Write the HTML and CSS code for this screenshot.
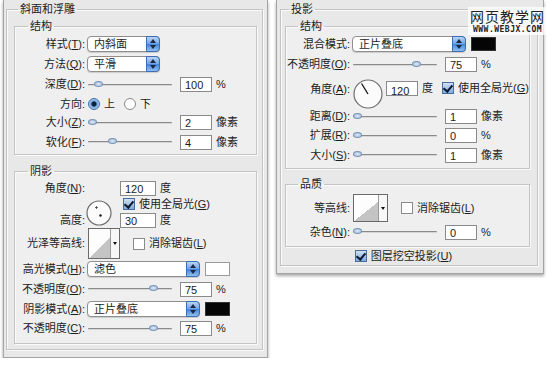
FILE: index.html
```html
<!DOCTYPE html>
<html lang="zh">

<head>
  <meta charset="UTF-8">
  <title>图层样式</title>
  <link rel="stylesheet" href="styles.css">
</head>

<body>
  <main class="stage">
    <section class="window win-left">
      <fieldset class="frame">
        <legend>斜面和浮雕</legend>

        <fieldset class="group g-bevel">
          <legend>结构</legend>
          <div class="row h20">
            <span class="lbl">样式(<u>T</u>):</span>
            <span class="select w73">内斜面<i class="arrows"></i></span>
          </div>
          <div class="row h20">
            <span class="lbl">方法(<u>Q</u>):</span>
            <span class="select w73">平滑<i class="arrows"></i></span>
          </div>
          <div class="row h21">
            <span class="lbl">深度(<u>D</u>):</span>
            <span class="slider"><i class="thumb" style="left:6px"></i></span>
            <span class="field">100</span><span class="unit">%</span>
          </div>
          <div class="row h18">
            <span class="lbl">方向:</span>
            <span class="radio on"></span><span class="opt">上</span>
            <span class="radio"></span><span class="opt">下</span>
          </div>
          <div class="row h19">
            <span class="lbl">大小(<u>Z</u>):</span>
            <span class="slider"><i class="thumb" style="left:0px"></i></span>
            <span class="field">2</span><span class="unit">像素</span>
          </div>
          <div class="row h20">
            <span class="lbl">软化(<u>F</u>):</span>
            <span class="slider"><i class="thumb" style="left:20px"></i></span>
            <span class="field">4</span><span class="unit">像素</span>
          </div>
        </fieldset>

        <fieldset class="group g-shade">
          <legend>阴影</legend>
          <div class="angle-block">
            <div class="lbl-col">
              <span class="lbl">角度(<u>N</u>):</span>
              <span class="lbl">高度:</span>
            </div>
            <svg class="dial dial-sm" viewBox="0 0 26 26">
              <circle cx="13" cy="13" r="12" fill="#fbfbfb" stroke="#6d6d6d" stroke-width="1.2" />
              <path d="M9 7.5h3M10.5 6v3" stroke="#444" stroke-width="0.8" />
              <circle cx="14.5" cy="15.5" r="1.2" fill="#111" />
            </svg>
            <div class="angle-fields">
              <div class="line"><span class="field w36">120</span><span class="unit">度</span></div>
              <div class="line"><span class="check on"></span>使用全局光(<u>G</u>)</div>
              <div class="line"><span class="field w36">30</span><span class="unit">度</span></div>
            </div>
          </div>
          <div class="row h31">
            <span class="lbl">光泽等高线:</span>
            <span class="contour c-sm"><i class="drop"></i></span>
            <span class="check"></span>消除锯齿(<u>L</u>)
          </div>
          <div class="row h20">
            <span class="lbl">高光模式(<u>H</u>):</span>
            <span class="select w113">滤色<i class="arrows"></i></span>
            <span class="swatch white"></span>
          </div>
          <div class="row h20">
            <span class="lbl">不透明度(<u>O</u>):</span>
            <span class="slider"><i class="thumb" style="left:61px"></i></span>
            <span class="field">75</span><span class="unit">%</span>
          </div>
          <div class="row h20">
            <span class="lbl">阴影模式(<u>A</u>):</span>
            <span class="select w113">正片叠底<i class="arrows"></i></span>
            <span class="swatch black"></span>
          </div>
          <div class="row h19">
            <span class="lbl">不透明度(<u>C</u>):</span>
            <span class="slider"><i class="thumb" style="left:61px"></i></span>
            <span class="field">75</span><span class="unit">%</span>
          </div>
        </fieldset>
      </fieldset>
    </section>

    <section class="window win-right">
      <fieldset class="frame">
        <legend>投影</legend>

        <fieldset class="group g-drop">
          <legend>结构</legend>
          <div class="row h20">
            <span class="lbl">混合模式:</span>
            <span class="select w114">正片叠底<i class="arrows"></i></span>
            <span class="swatch black"></span>
          </div>
          <div class="row h21">
            <span class="lbl">不透明度(<u>O</u>):</span>
            <span class="slider"><i class="thumb" style="left:59px"></i></span>
            <span class="field">75</span><span class="unit">%</span>
          </div>
          <div class="angle-row">
            <span class="lbl">角度(<u>A</u>):</span>
            <svg class="dial dial-lg" viewBox="0 0 30 30">
              <circle cx="15" cy="15" r="14" fill="#fbfbfb" stroke="#6d6d6d" stroke-width="1.2" />
              <path d="M15 15L8.5 4.5" stroke="#111" stroke-width="1.3" />
            </svg>
            <span class="field">120</span><span class="unit">度</span>
            <span class="check on gap"></span><span class="txt">使用全局光(<u>G</u>)</span>
          </div>
          <div class="row h19">
            <span class="lbl">距离(<u>D</u>):</span>
            <span class="slider"><i class="thumb" style="left:0px"></i></span>
            <span class="field">1</span><span class="unit">像素</span>
          </div>
          <div class="row h19">
            <span class="lbl">扩展(<u>R</u>):</span>
            <span class="slider"><i class="thumb" style="left:0px"></i></span>
            <span class="field">0</span><span class="unit">%</span>
          </div>
          <div class="row h20">
            <span class="lbl">大小(<u>S</u>):</span>
            <span class="slider"><i class="thumb" style="left:0px"></i></span>
            <span class="field">1</span><span class="unit">像素</span>
          </div>
        </fieldset>

        <fieldset class="group g-quality">
          <legend>品质</legend>
          <div class="row h32">
            <span class="lbl">等高线:</span>
            <span class="contour c-lg"><i class="drop"></i></span>
            <span class="check"></span>消除锯齿(<u>L</u>)
          </div>
          <div class="row h16">
            <span class="lbl">杂色(<u>N</u>):</span>
            <span class="slider"><i class="thumb" style="left:0px"></i></span>
            <span class="field">0</span><span class="unit">%</span>
          </div>
        </fieldset>

        <div class="knockout"><span class="check on"></span>图层挖空投影(<u>U</u>)</div>
      </fieldset>
    </section>

    <div class="watermark">
      <span class="wm-cn">网页教学网</span>
      <span class="wm-en">WWW.WEBJX.COM</span>
    </div>
  </main>
</body>

</html>
```

FILE: styles.css
```css
* {
  box-sizing: border-box;
}

body {
  margin: 0;
  background: #fff;
  color: #1c1c1c;
  font: 11px/1 "Liberation Sans", "Noto Sans CJK SC", sans-serif;
}

u {
  text-decoration: underline;
  text-underline-offset: 1px;
}

.stage {
  display: flex;
  align-items: flex-start;
  gap: 8px;
  padding-left: 3px;
  position: relative;
}

.window {
  background: #e8e8e8;
  border: 1px solid #a4a4a4;
  border-top: 0;
  box-shadow: 0 2px 3px rgba(0, 0, 0, 0.35);
}

.win-left {
  width: 265px;
  height: 358px;
  padding: 2px 4px 0 2px;
}

.win-right {
  width: 268px;
  height: 274px;
  padding: 2px 8px 0 3px;
}

fieldset {
  margin: 0;
  border: 1px solid #c4c4c4;
  box-shadow: 1px 1px 0 #fafafa, inset 1px 1px 0 #fafafa;
}

legend {
  line-height: 14px;
  padding: 0 2px;
  font-size: 11px;
}

.frame {
  padding: 3px 5px 5px 7px;
}

.frame > legend {
  margin-left: 4px;
}

.win-right .frame {
  padding: 3px 7px 1px 4px;
}

.group {
  background: #efefef;
  padding: 1px 0 2px 0;
}

.group > legend {
  margin-left: 13px;
}

.win-right .group > legend {
  margin-left: 12px;
}

.g-shade {
  margin-top: 9px;
  padding-bottom: 5px;
}

.g-drop {
  padding-bottom: 3px;
}

.g-quality {
  margin-top: 8px;
  padding-bottom: 6px;
}

.row {
  display: flex;
  align-items: center;
  white-space: nowrap;
}

.h16 { height: 16px; }
.h18 { height: 18px; }
.h19 { height: 19px; }
.h20 { height: 20px; }
.h21 { height: 21px; }
.h31 { height: 31px; }
.h32 { height: 32px; }

.lbl {
  display: flex;
  justify-content: flex-end;
  width: 70px;
  margin-right: 3px;
  white-space: nowrap;
  flex-shrink: 0;
}

.win-right .lbl {
  width: 64px;
}

/* select boxes */
.select {
  position: relative;
  height: 16px;
  margin-left: -1px;
  padding: 2px 0 0 6px;
  background: #fff;
  border: 1px solid #8f8f8f;
  border-radius: 4px;
  box-shadow: 0 1px 1px rgba(0, 0, 0, 0.15);
}

.w73 { width: 73px; }
.w113 { width: 113px; }
.w114 { width: 114px; }

.arrows {
  position: absolute;
  top: -1px;
  right: -1px;
  width: 14px;
  height: 16px;
  border: 1px solid #3b6db3;
  border-radius: 0 4px 4px 0;
  background: linear-gradient(#b8d6f6, #6aa3e6 50%, #3f84d8 51%, #8fc0f3);
}

.arrows::before,
.arrows::after {
  content: "";
  position: absolute;
  left: 3px;
  border-left: 3px solid transparent;
  border-right: 3px solid transparent;
}

.arrows::before {
  top: 2px;
  border-bottom: 4px solid #1d2a44;
}

.arrows::after {
  bottom: 2px;
  border-top: 4px solid #1d2a44;
}

.swatch {
  width: 25px;
  height: 14px;
  margin-left: 5px;
  border: 1px solid #9a9a9a;
}

.swatch.white { background: #fff; }
.swatch.black { background: #050505; border-color: #333; }

/* sliders */
.slider {
  position: relative;
  width: 84px;
  height: 2px;
  margin-right: 8px;
  background: #8a8a8a;
  border-bottom: 1px solid #d6d6d6;
  border-radius: 1px;
  flex-shrink: 0;
}

.thumb {
  position: absolute;
  top: -3px;
  width: 9px;
  height: 6px;
  background: radial-gradient(#e2ecf8, #8fb0d6);
  border: 1px solid #7c93b3;
  border-radius: 50%;
}

.field {
  width: 32px;
  height: 15px;
  padding: 2px 0 0 4px;
  background: #fff;
  border: 1px solid #8a8a8a;
  font-size: 11px;
  flex-shrink: 0;
}

.field.w36 {
  width: 36px;
}

.unit {
  margin-left: 4px;
}

/* radios and checks */
.radio {
  width: 12px;
  height: 12px;
  margin-right: 4px;
  border: 1px solid #8a8a8a;
  border-radius: 50%;
  background: #fff;
}

.radio.on {
  border-color: #3f6ea8;
  background: radial-gradient(circle, #0e1f3a 0 2px, #6e9fd9 3px, #cfe1f6 6px);
}

.opt {
  margin-right: 9px;
}

.check {
  width: 12px;
  height: 12px;
  margin-right: 4px;
  border: 1px solid #8a8a8a;
  background: #fff;
  flex-shrink: 0;
}

.check.on {
  position: relative;
  border-color: #4a6e9e;
  background: linear-gradient(#cfe0f5, #7eaae0);
}

.check.on::after {
  content: "";
  position: absolute;
  left: 2px;
  top: 0;
  width: 4px;
  height: 7px;
  border: solid #0f1b33;
  border-width: 0 2px 2px 0;
  transform: rotate(40deg);
}

.check.gap {
  margin-left: 9px;
}

/* angle pickers */
.angle-block {
  display: flex;
  align-items: flex-start;
  height: 48px;
  margin-top: 1px;
}

.lbl-col {
  display: flex;
  flex-direction: column;
  justify-content: space-between;
  height: 48px;
  margin-right: 3px;
}

.lbl-col .lbl {
  line-height: 16px;
  margin-right: 0;
}

.dial {
  flex-shrink: 0;
}

.dial-sm {
  width: 26px;
  height: 26px;
  margin: 20px 0 0 -2px;
}

.angle-fields {
  margin-left: 8px;
}

.angle-fields .line {
  display: flex;
  align-items: center;
  height: 16px;
  white-space: nowrap;
}

.angle-fields .check {
  margin-left: 3px;
}

.angle-row {
  display: flex;
  align-items: flex-start;
  height: 32px;
  white-space: nowrap;
  line-height: 14px;
}

.angle-row > .lbl,
.angle-row > .field,
.angle-row > .unit {
  margin-top: 6px;
}

.angle-row > .lbl {
  margin-top: 7px;
}

.angle-row > .check {
  margin-top: 7px;
}

.angle-row > .txt {
  margin-top: 6px;
}

.dial-lg {
  width: 30px;
  height: 30px;
  margin: 4px 3px 0 0;
}

/* contour pickers */
.contour {
  position: relative;
  background: linear-gradient(to top left, #c4c4c4 50%, #fdfdfd 50%);
  border: 1px solid #6a6a6a;
  margin-right: 13px;
  flex-shrink: 0;
}

.c-sm {
  width: 32px;
  height: 31px;
}

.c-lg {
  width: 35px;
  height: 28px;
}

.drop {
  position: absolute;
  top: 0;
  right: 0;
  width: 9px;
  height: 100%;
  background: #f7f7f7;
  border-left: 1px solid #9a9a9a;
}

.drop::after {
  content: "";
  position: absolute;
  left: 2px;
  top: 45%;
  border-left: 2px solid transparent;
  border-right: 2px solid transparent;
  border-top: 3px solid #111;
}

.knockout {
  display: flex;
  align-items: center;
  justify-content: center;
  height: 16px;
  margin-top: 1px;
  padding-right: 8px;
}

/* watermark */
.watermark {
  position: absolute;
  top: 7px;
  left: 468px;
  display: flex;
  flex-direction: column;
  align-items: center;
  padding: 1px 2px;
  background: rgba(255, 255, 255, 0.75);
  color: #222;
}

.wm-cn {
  font: 14px/17px "Noto Sans CJK SC", sans-serif;
  letter-spacing: 1px;
}

.wm-en {
  font: bold 8px/9px "DejaVu Sans Mono", monospace;
  letter-spacing: 0.5px;
}
```
